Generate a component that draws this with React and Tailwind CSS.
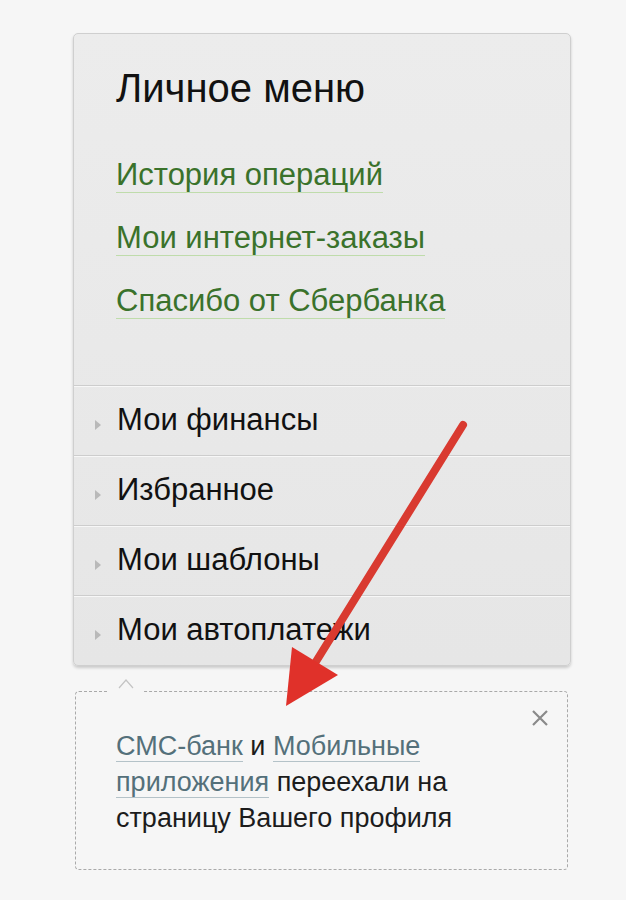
import React from 'react';

const links = ['История операций', 'Мои интернет-заказы', 'Спасибо от Сбербанка'];
const sections = ['Мои финансы', 'Избранное', 'Мои шаблоны', 'Мои автоплатежи'];

const App = () => {
  return (
    <div
      className="relative min-h-[900px] w-[626px] bg-[#f6f6f6] pt-[33px]"
      style={{ fontFamily: '"Liberation Sans", Arial, sans-serif' }}
    >
      {/* Personal menu panel */}
      <div className="ml-[73px] w-[498px] overflow-hidden rounded-[5px] border border-[#cfcfcf] bg-gradient-to-b from-[#ececec] to-[#e6e6e6] shadow-[0_2px_3px_rgba(0,0,0,0.18)]">
        <div className="h-[351px] pl-[42px] pt-[32px]">
          <h2 className="text-[40px] leading-[44px] text-[#111]">Личное меню</h2>
          <div className="mt-[47px] flex flex-col gap-[27px]">
            {links.map((link) => (
              <div key={link} className="h-[36px] leading-[36px]">
                <a className="border-b border-[#bfdcab] text-[31px] text-[#3a722b]">{link}</a>
              </div>
            ))}
          </div>
        </div>

        {sections.map((name) => (
          <div
            key={name}
            className="flex h-[70px] items-center border-t border-[#cdcdcd] shadow-[inset_0_1px_0_#f7f7f7]"
          >
            <span className="ml-[21px] mr-[16px] mt-[8px] h-0 w-0 border-y-[5px] border-l-[6px] border-y-transparent border-l-[#b9b9b9]" />
            <span className="text-[31px] text-[#111]">{name}</span>
          </div>
        ))}
      </div>

      {/* Notice about moved services */}
      <div className="relative ml-[75px] mt-[25px] h-[179px] w-[493px] rounded-[4px] border border-dashed border-[#a9a9a9] pl-[40px] pt-[36px]">
        <div className="absolute -top-[14px] left-[32px] h-[14px] w-[36px] bg-[#f6f6f6]" />
        <svg className="absolute -top-[13px] left-[42px]" width="16" height="10" viewBox="0 0 16 10">
          <path d="M1 9 L8 1 L15 9" fill="none" stroke="#c4c4c4" strokeWidth="1.2" />
        </svg>
        <svg className="absolute right-[18px] top-[17px]" width="18" height="18" viewBox="0 0 18 18">
          <path d="M2 2 L16 16 M16 2 L2 16" stroke="#8a8a8a" strokeWidth="2.2" />
        </svg>
        <p className="w-[380px] text-[27px] leading-[36px] text-[#1c1c1c]">
          <a className="border-b border-[#b4c2c8] text-[#54707a]">СМС-банк</a> и{' '}
          <a className="border-b border-[#b4c2c8] text-[#54707a]">Мобильные приложения</a> переехали на
          страницу Вашего профиля
        </p>
      </div>

      {/* Red annotation arrow */}
      <svg className="pointer-events-none absolute left-0 top-0" width="626" height="900" viewBox="0 0 626 900">
        <line x1="463" y1="425" x2="312" y2="668" stroke="#d93a30" strokeWidth="8" strokeLinecap="round" />
        <polygon points="292,647 338,675 286,706" fill="#e0312a" />
      </svg>
    </div>
  );
};

export default App;
